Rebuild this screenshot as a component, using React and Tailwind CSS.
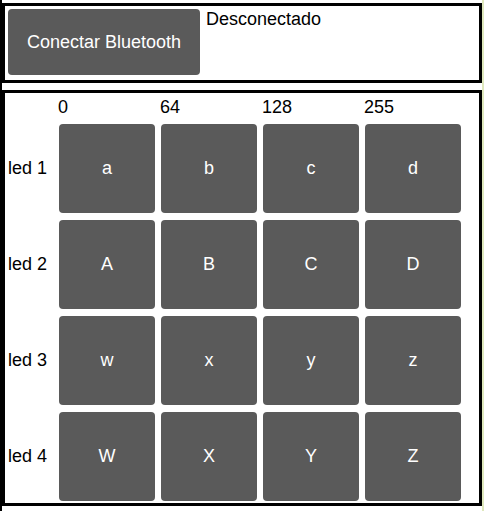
import React from "react";

const cols = ["0", "64", "128", "255"];
const rows = [
  ["led 1", ["a", "b", "c", "d"]],
  ["led 2", ["A", "B", "C", "D"]],
  ["led 3", ["w", "x", "y", "z"]],
  ["led 4", ["W", "X", "Y", "Z"]],
];

const Btn = ({ label }) => (
  <button className="w-[96px] h-[89px] bg-[#5a5a5a] rounded-[4px] text-white text-[18px] flex items-center justify-center">
    {label}
  </button>
);

export default function App() {
  return (
    <div
      className="w-[484px] h-[511px] bg-white border-l-2 border-black border-r-2 border-r-[#dfe8bd] pt-[3px] text-black"
      style={{ fontFamily: '"Liberation Sans", Arial, sans-serif' }}
    >
      {/* conexion */}
      <div className="h-[80px] border-[3px] border-black flex items-start">
        <button className="ml-[3px] mt-[3px] w-[192px] h-[66px] bg-[#5a5a5a] rounded-[4px] text-white text-[18px]">
          Conectar Bluetooth
        </button>
        <div className="ml-[6px] mt-[3px] text-[18px] leading-[21px]">Desconectado</div>
      </div>

      {/* leds */}
      <div className="mt-[7px] h-[416px] border-[3px] border-black pb-[2px]">
        <div className="h-[31px] pt-[4px] flex text-[18px] leading-[21px]">
          <div className="w-[53px]" />
          {cols.map((c) => (
            <div key={c} className="w-[102px]">{c}</div>
          ))}
        </div>
        <div className="flex flex-col gap-[7px]">
          {rows.map(([name, keys]) => (
            <div key={name} className="flex items-center">
              <div className="w-[54px] pl-[3px] text-[18px]">{name}</div>
              <div className="flex gap-[6px]">
                {keys.map((k) => (
                  <Btn key={k} label={k} />
                ))}
              </div>
            </div>
          ))}
        </div>
      </div>
    </div>
  );
}
